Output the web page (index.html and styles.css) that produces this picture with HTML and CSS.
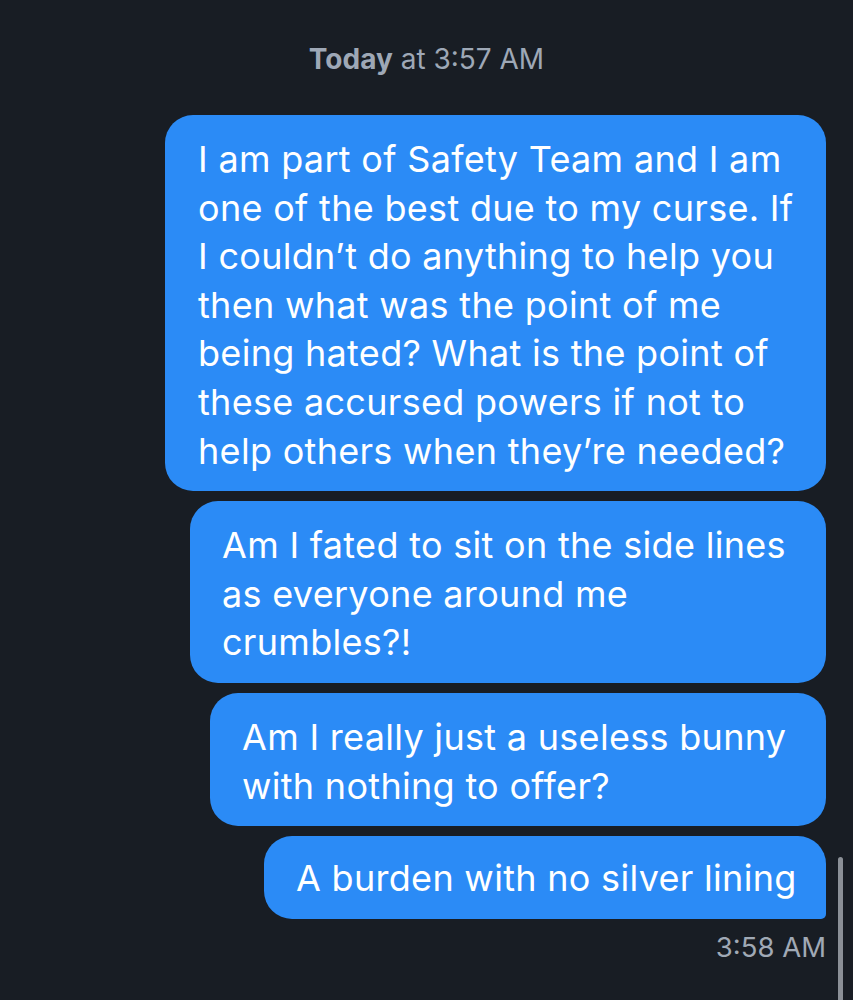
FILE: index.html
```html
<!DOCTYPE html>
<html>
<head>
<meta charset="utf-8">
<link rel="stylesheet" href="styles.css">
</head>
<body>
<div class="chat">
  <div class="stamp"><b>Today</b> at 3:57 AM</div>
  <div class="bubble w1">I am part of Safety Team and I am<br>one of the best due to my curse. If<br>I couldn’t do anything to help you<br>then what was the point of me<br>being hated? What is the point of<br>these accursed powers if not to<br>help others when they’re needed?</div>
  <div class="bubble w2">Am I fated to sit on the side lines<br>as everyone around me<br>crumbles?!</div>
  <div class="bubble w3">Am I really just a useless bunny<br>with nothing to offer?</div>
  <div class="bubble w4 last">A burden with no silver lining</div>
  <div class="time">3:58 AM</div>
</div>
<div class="scrollbar"></div>
</body>
</html>
```
FILE: styles.css
```css
html, body {
  margin: 0;
  padding: 0;
  background: #181d24;
  height: 1000px;
  overflow: hidden;
}
.chat {
  display: flex;
  flex-direction: column;
  align-items: flex-end;
  padding: 42px 27px 0 0;
  gap: 10px;
  font-family: Inter, "Noto Sans", sans-serif;
}
.stamp {
  align-self: stretch;
  padding-left: 27px;
  text-align: center;
  color: #9ea8b6;
  font-size: 28px;
  line-height: 34px;
  margin-bottom: 29px;
}
.stamp b { font-weight: 700; }
.bubble {
  box-sizing: border-box;
  background: #2b8bf6;
  color: #ffffff;
  font-size: 36px;
  letter-spacing: 0.3px;
  line-height: 48.6px;
  padding: 20px 32px 16px;
  border-radius: 28px;
  white-space: nowrap;
}
.w1 { width: 661px; padding-left: 33px; }
.w2 { width: 636px; }
.w3 { width: 616px; }
.w4 { width: 562px; }
.last { border-bottom-right-radius: 5px; padding-top: 18px; padding-bottom: 16px; }
.time {
  color: #a0a9b5;
  font-size: 27.5px;
  line-height: 34px;
  margin-top: 1px;
}
.scrollbar {
  position: absolute;
  left: 838px;
  top: 857px;
  width: 5px;
  height: 160px;
  border-radius: 3px;
  background: #8b9097;
}
```
